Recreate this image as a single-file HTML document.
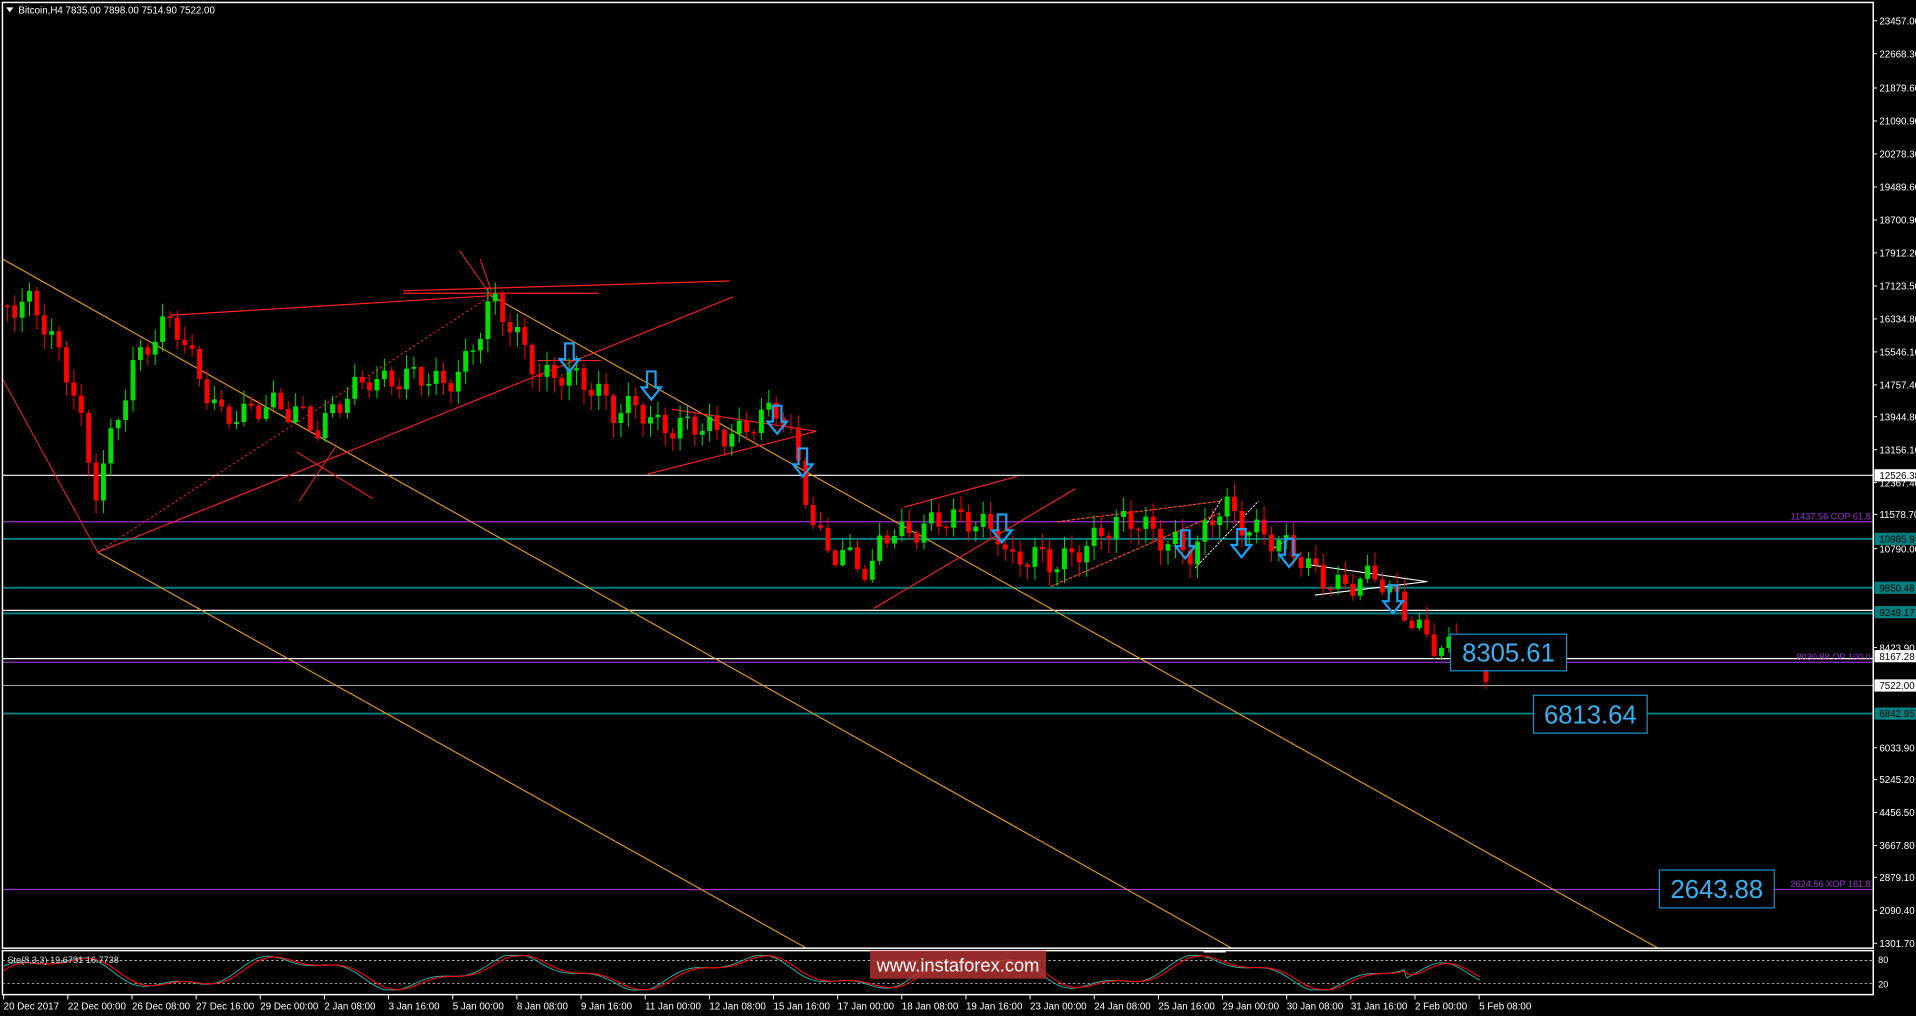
<!DOCTYPE html>
<html><head><meta charset="utf-8"><style>
html,body{margin:0;padding:0;background:#000;overflow:hidden}
svg{display:block}
text{font-family:"Liberation Sans",sans-serif}
</style></head><body>
<svg id="s" width="1916" height="1016" viewBox="0 0 1568 831.5" preserveAspectRatio="none" xmlns="http://www.w3.org/2000/svg">
<rect x="0" y="0" width="1568" height="832" fill="#000"/>
<g id="lines"></g>
<g id="candles"></g>
<g id="over"></g>
<rect x="2" y="2" width="1531" height="774" fill="none" stroke="#fff" stroke-width="1.2"/>
<rect x="2" y="778" width="1531" height="36" fill="none" stroke="#fff" stroke-width="1.2"/>
<g id="axis" font-size="8" fill="#fff"></g>
<text x="15" y="11" font-size="8" fill="#fff">Bitcoin,H4  7835.00 7898.00 7514.90 7522.00</text>
<path d="M5 6 L11 6 L8 10 Z" fill="#fff"/>
<g id="stoch"></g>
<text x="6" y="788" font-size="7.5" fill="#ddd">Sto(8,3,3) 19.6731 16.7738</text>
<text x="1537" y="788" font-size="7.5" fill="#fff">80</text>
<text x="1537" y="808" font-size="7.5" fill="#fff">20</text>
<g id="time" font-size="8" fill="#fff"></g>
<rect x="712" y="778" width="144" height="23" fill="#b03030" fill-opacity="0.85"/>
<text x="784" y="795" font-size="15" fill="#fff" text-anchor="middle">www.instaforex.com</text>
</svg>
<script>
(function(){
var NS="http://www.w3.org/2000/svg";
function el(p,t,a){var e=document.createElementNS(NS,t);for(var k in a)e.setAttribute(k,a[k]);document.getElementById(p).appendChild(e);return e;}
function line(p,x1,y1,x2,y2,c,w,d){var a={x1:x1,y1:y1,x2:x2,y2:y2,stroke:c,"stroke-width":w||1};if(d)a["stroke-dasharray"]=d;el(p,"line",a);}
function txt(p,x,y,s){var e=el(p,"text",{x:x,y:y});e.textContent=s;return e;}
line("lines",2,389,1533,389,"#fff",1);
line("lines",2,427,1533,427,"#9b30d0",1);
line("lines",2,441,1533,441,"#008080",1.6);
line("lines",2,481,1533,481,"#008080",1.6);
line("lines",2,499.5,1533,499.5,"#fff",1);
line("lines",2,502,1533,502,"#008080",1.6);
line("lines",2,539,1533,539,"#fff",1);
line("lines",2,542,1533,542,"#9b30d0",1);
line("lines",2,561,1533,561,"#aaa",0.8);
line("lines",2,584,1533,584,"#008080",1.6);
line("lines",2,728,1533,728,"#9b30d0",1);
line("lines",2,212,1008,776,"#e8a020",0.9);
line("lines",80,452,660,776,"#e8a020",0.9);
line("lines",402,242,1357,776,"#e8a020",0.9);
line("lines",2,310,80,452,"#ff2020",0.8);
line("lines",80,452,402,242,"#ff2020",0.8,"2,2");
line("lines",80,452,600,243,"#ff2020",0.9);
line("lines",140,258,402,242,"#ff2020",1);
line("lines",330,238,597,230,"#ff2020",1);
line("lines",330,240,490,240,"#ff2020",1);
line("lines",376,205,402,242,"#ff2020",0.8);
line("lines",393,212,402,238,"#ff2020",0.8);
line("lines",245,410,275,365,"#ff2020",0.8);
line("lines",243,370,305,408,"#ff2020",0.8);
line("lines",440,295,492,295,"#ff2020",0.8);
line("lines",530,388,668,353,"#ff2020",0.9);
line("lines",550,335,668,353,"#ff2020",0.9);
line("lines",715,498,880,400,"#ff2020",0.9);
line("lines",740,415,832,390,"#ff2020",0.9);
line("lines",860,480,998,420,"#ff5020",0.9,"3,1");
line("lines",865,427,1000,410,"#ff5020",0.9,"3,1");
line("lines",978,465,1030,410,"#fff",0.7,"2,1");
line("lines",985,433,1000,408,"#fff",0.7,"2,1");
line("lines",1070,462,1168,476,"#fff",0.9);
line("lines",1076,487,1168,476,"#fff",0.9);
line("lines",1040,450,1060,438,"#fff",0.7,"2,1");
var kp=[[4,250],[25,240],[45,290],[60,330],[75,405],[90,350],[105,300],[125,280],[140,265],[160,300],[180,340],[200,345],[220,330],[240,330],[260,355],[280,330],[300,305],[330,310],[360,318],[380,290],[400,245],[420,280],[440,305],[460,300],[480,320],[500,340],[520,325],[535,345],[550,355],[580,350],[600,350],[620,345],[635,340],[645,360],[655,390],[665,430],[680,450],[700,465],[710,480],[720,435],[740,430],[760,430],[780,430],[800,425],[815,430],[825,460],[845,460],[860,465],[880,445],[900,435],[930,430],[960,440],[975,455],[990,430],[1000,415],[1010,425],[1030,430],[1050,450],[1070,470],[1090,475],[1110,472],[1125,475],[1135,490],[1150,505],[1170,520],[1185,530],[1200,540],[1215,557]];
function interp(x){for(var i=0;i<kp.length-1;i++){if(x>=kp[i][0]&&x<=kp[i+1][0]){var t=(x-kp[i][0])/(kp[i+1][0]-kp[i][0]);return kp[i][1]+t*(kp[i+1][1]-kp[i][1]);}}return kp[kp.length-1][1];}
var prev=250,i=0;
for(var x=4;x<=1214;x+=6.05,i++){
 var c=interp(x)+Math.sin(i*1.7)*10+Math.sin(i*0.53)*6;
 var o=prev;var tp=Math.min(o,c),bt=Math.max(o,c);
 if(bt-tp<1.2){bt=tp+1.2;}
 var hi=tp-Math.abs(Math.sin(i*2.3))*10-1,lo=bt+Math.abs(Math.cos(i*3.1))*11+1;
 var col=c<o?"#00e000":"#ff0000";
 line("candles",x+2,hi,x+2,lo,col,0.8);
 el("candles","rect",{x:x,y:tp,width:4,height:bt-tp,fill:col});
 prev=c;
}
var arr=[[466,281],[533,304],[636,332],[657,367],[820,421],[970,434],[1016,433],[1055,441],[1140,479]];
arr.forEach(function(a){var x=a[0],y=a[1];
 el("over","path",{d:"M"+(x-3.5)+" "+y+" h7 v13 h4.5 l-8 10 l-8 -10 h4.5 z",fill:"none",stroke:"#1ea0f0","stroke-width":1.8});});
function box(x,y,w,h,s){el("over","rect",{x:x,y:y,width:w,height:h,fill:"#000",stroke:"#1a8fd0","stroke-width":1});var t=txt("over",x+w/2,y+h/2+7.5,s);t.setAttribute("font-size","21");t.setAttribute("fill","#39b0f0");t.setAttribute("text-anchor","middle");}
box(1187,519,95,30,"8305.61");box(1255,569,93,31,"6813.64");box(1358,712,94,31,"2643.88");
function ptxt(x,y,s){var t=txt("over",x,y,s);t.setAttribute("font-size","7.5");t.setAttribute("fill","#9b30d0");t.setAttribute("text-anchor","end");}
ptxt(1531,425,"11437.56  COP 61.8");ptxt(1531,540,"8030.88  OP 100.0");ptxt(1531,726,"2624.56  XOP 161.8");
var ax=[["23457.00",17],["22668.30",44],["21879.60",72],["21090.90",99],["20278.30",126],["19489.60",153],["18700.90",180],["17912.20",207],["17123.50",234],["16334.80",261],["15546.10",288],["14757.40",315],["13944.80",341],["13156.10",368],["12367.40",395],["11578.70",421],["10790.00",449],["8423.90",530],["6033.90",612],["5245.20",638],["4456.50",665],["3667.80",692],["2879.10",718],["2090.40",745],["1301.70",772]];
ax.forEach(function(a){line("axis",1533,a[1],1536,a[1],"#fff",0.8);txt("axis",1538,a[1]+3,a[0]);});
function lab(y,s,bg,fg){el("axis","rect",{x:1534,y:y-5,width:34,height:10,fill:bg});var t=txt("axis",1538,y+3,s);t.setAttribute("fill",fg);}
lab(389,"12526.38","#fff","#000");lab(441,"10985.91","#008080","#000");lab(481,"9850.48","#008080","#000");lab(501,"9249.17","#008080","#000");lab(537,"8167.28","#fff","#000");lab(561,"7522.00","#fff","#000");lab(584,"6842.95","#008080","#000");
line("stoch",2,786,1533,786,"#ccc",0.7,"2,2");line("stoch",2,805,1533,805,"#ccc",0.7,"2,2");
line("stoch",985,779,1003,779,"#fff",1);
var m="",s="",sv=50,pts=[];
for(var x=3;x<=1212;x+=2){var v=50+38*Math.sin(x/30)+14*Math.sin(x/11+1)+(x>1150?-25:0);v=Math.max(3,Math.min(97,v));pts.push(v);}
var idx=0;for(var x=3;x<=1212;x+=2,idx++){var v=pts[idx];sv=sv*0.7+v*0.3;var y1=811-v*0.3,y2=811-sv*0.3;m+=(idx?"L":"M")+x+" "+y1.toFixed(1);s+=(idx?"L":"M")+x+" "+y2.toFixed(1);}
el("stoch","path",{d:m,fill:"none",stroke:"#20b2aa","stroke-width":0.8});
el("stoch","path",{d:s,fill:"none",stroke:"#ff0000","stroke-width":0.9});
var tl=["20 Dec 2017","22 Dec 00:00","26 Dec 08:00","27 Dec 16:00","29 Dec 00:00","2 Jan 08:00","3 Jan 16:00","5 Jan 00:00","8 Jan 08:00","9 Jan 16:00","11 Jan 00:00","12 Jan 08:00","15 Jan 16:00","17 Jan 00:00","18 Jan 08:00","19 Jan 16:00","23 Jan 00:00","24 Jan 08:00","25 Jan 16:00","29 Jan 00:00","30 Jan 08:00","31 Jan 16:00","2 Feb 00:00","5 Feb 08:00"];
tl.forEach(function(t,k){var x=3+k*52.5;line("time",x,814,x,818,"#fff",0.8);txt("time",x,826,t);});
})();
</script>
</body></html>
